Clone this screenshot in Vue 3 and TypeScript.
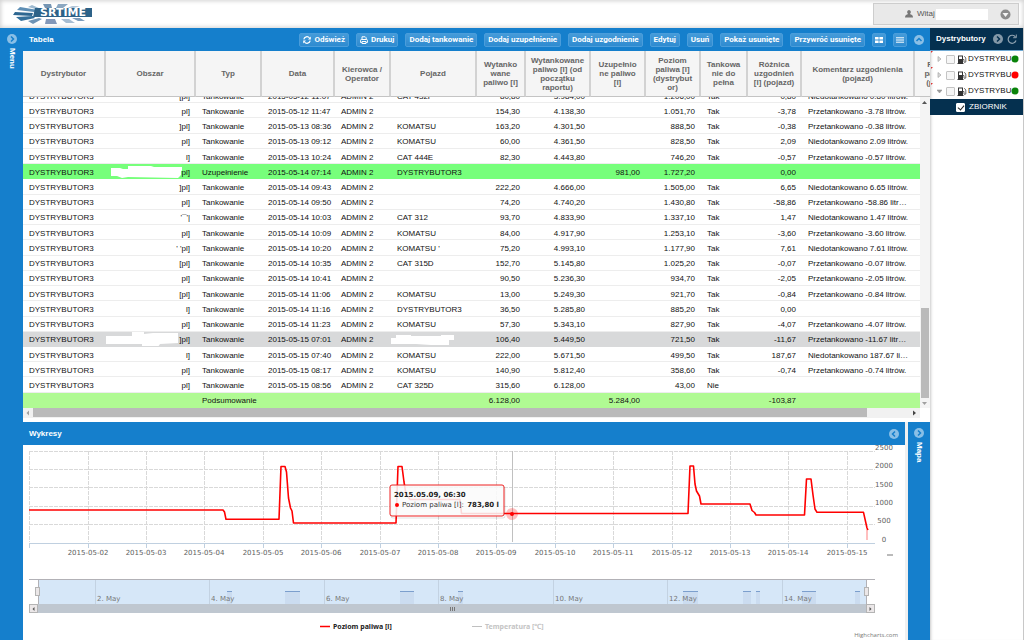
<script setup lang="ts">
import { ref } from 'vue'

interface Column {
  title: string
  width: number
  align: 'left' | 'right'
}

interface Entry {
  cells: string[]
  kind?: 'refill' | 'selected' | 'total'
}

const columns: Column[] = [
  { title: 'Dystrybutor', width: 83, align: 'left' },
  { title: 'Obszar', width: 90, align: 'right' },
  { title: 'Typ', width: 66, align: 'left' },
  { title: 'Data', width: 73, align: 'left' },
  { title: 'Kierowca /\nOperator', width: 56, align: 'left' },
  { title: 'Pojazd', width: 86, align: 'left' },
  { title: 'Wytanko\nwane\npaliwo [l]', width: 49, align: 'right' },
  { title: 'Wytankowane\npaliwo [l] (od\npoczątku\nraportu)', width: 65, align: 'right' },
  { title: 'Uzupełnio\nne paliwo\n[l]', width: 55, align: 'right' },
  { title: 'Poziom\npaliwa [l]\n(dystrybut\nor)', width: 55, align: 'right' },
  { title: 'Tankowa\nnie do\npełna', width: 47, align: 'left' },
  { title: 'Różnica\nuzgodnień\n[l] (pojazd)', width: 54, align: 'right' },
  { title: 'Komentarz uzgodnienia\n(pojazd)', width: 113, align: 'left' },
  { title: 'Poziom\npaliwa [l]\n(pojazd)', width: 55, align: 'right' },
]
const tableWidth = columns.reduce((sum, c) => sum + c.width, 0)

const D = 'DYSTRYBUTOR3'
const T = 'Tankowanie'
const A = 'ADMIN 2'
const tank = (area: string, date: string, vehicle: string, a: string, b: string, level: string, full: string, diff: string, note: string): Entry => ({
  cells: [D, area, T, '2015-05-' + date, A, vehicle, a, b, '', level, full, diff, note, ''],
})

const rows: Entry[] = [
  tank('[pl]', '12 11:07', 'CAT 432F', '80,80', '3.984,00', '1.206,00', 'Tak', '0,80', 'Niedotankowano 0.80 litrów.'),
  tank('pl]', '12 11:47', '', '154,30', '4.138,30', '1.051,70', 'Tak', '-3,78', 'Przetankowano -3.78 litrów.'),
  tank(']pl]', '13 08:36', 'KOMATSU', '163,20', '4.301,50', '888,50', 'Tak', '-0,38', 'Przetankowano -0.38 litrów.'),
  tank('pl]', '13 09:12', 'KOMATSU', '60,00', '4.361,50', '828,50', 'Tak', '2,09', 'Niedotankowano 2.09 litrów.'),
  tank('l]', '13 10:24', 'CAT 444E', '82,30', '4.443,80', '746,20', 'Tak', '-0,57', 'Przetankowano -0.57 litrów.'),
  { kind: 'refill', cells: [D, 'pl]', 'Uzupełnienie', '2015-05-14 07:14', A, D, '', '', '981,00', '1.727,20', '', '0,00', '', ''] },
  tank(']pl]', '14 09:43', '', '222,20', '4.666,00', '1.505,00', 'Tak', '6,65', 'Niedotankowano 6.65 litrów.'),
  tank('pl]', '14 09:50', '', '74,20', '4.740,20', '1.430,80', 'Tak', '-58,86', 'Przetankowano -58.86 litrów.'),
  tank("'¯'|", '14 10:03', 'CAT 312', '93,70', '4.833,90', '1.337,10', 'Tak', '1,47', 'Niedotankowano 1.47 litrów.'),
  tank('pl]', '14 10:09', 'KOMATSU', '84,00', '4.917,90', '1.253,10', 'Tak', '-3,60', 'Przetankowano -3.60 litrów.'),
  tank("' 'pl]", '14 10:20', "KOMATSU '", '75,20', '4.993,10', '1.177,90', 'Tak', '7,61', 'Niedotankowano 7.61 litrów.'),
  tank('[pl]', '14 10:35', 'CAT 315D', '152,70', '5.145,80', '1.025,20', 'Tak', '-0,07', 'Przetankowano -0.07 litrów.'),
  tank('pl]', '14 10:41', '', '90,50', '5.236,30', '934,70', 'Tak', '-2,05', 'Przetankowano -2.05 litrów.'),
  tank('[pl]', '14 11:06', 'KOMATSU', '13,00', '5.249,30', '921,70', 'Tak', '-0,84', 'Przetankowano -0.84 litrów.'),
  tank('l]', '14 11:16', D, '36,50', '5.285,80', '885,20', 'Tak', '0,00', ''),
  tank('pl]', '14 11:23', 'KOMATSU', '57,30', '5.343,10', '827,90', 'Tak', '-4,07', 'Przetankowano -4.07 litrów.'),
  { ...tank(']pl]', '15 07:01', '', '106,40', '5.449,50', '721,50', 'Tak', '-11,67', 'Przetankowano -11.67 litrów.'), kind: 'selected' },
  tank('l]', '15 07:40', 'KOMATSU', '222,00', '5.671,50', '499,50', 'Tak', '187,67', 'Niedotankowano 187.67 litrów.'),
  tank('pl]', '15 08:17', 'KOMATSU', '140,90', '5.812,40', '358,60', 'Tak', '-0,74', 'Przetankowano -0.74 litrów.'),
  tank('pl]', '15 08:56', 'CAT 325D', '315,60', '6.128,00', '43,00', 'Nie', '', ''),
  { kind: 'total', cells: ['', '', 'Podsumowanie', '', '', '', '6.128,00', '', '5.284,00', '', '', '-103,87', '', ''] },
]

const actions = ['Dodaj tankowanie', 'Dodaj uzupełnienie', 'Dodaj uzgodnienie', 'Edytuj', 'Usuń', 'Pokaż usunięte', 'Przywróć usunięte']

const dispensers = ref([
  { id: 1, name: 'DYSTRYBU', open: false, checked: false, color: '#0a830a' },
  { id: 2, name: 'DYSTRYBU', open: false, checked: false, color: '#ff0000' },
  { id: 3, name: 'DYSTRYBU', open: true, checked: false, color: '#0a830a' },
])
const tankChecked = ref(true)

// Chart geometry, in the units of the chart's view box.
const days = ['02', '03', '04', '05', '06', '07', '08', '09', '10', '11', '12', '13', '14', '15'].map((d, i) => ({
  label: '2015-05-' + d,
  x: Math.round(64.5 + i * 58.4),
}))
const levels = [2500, 2000, 1500, 1000, 500, 0].map((v, i) => ({ label: String(v), line: Math.round(5.6 + i * 18.4), text: Math.round(5 + i * 18.3) }))
const navDays = [2, 4, 6, 8, 10, 12, 14].map((d, i) => ({ label: d + '. May', x: Math.round(71.5 + i * 114.5) }))
const navBars = [[204, 5], [262, 15], [377, 14], [435, 5], [660, 15], [720, 8], [733, 4], [779, 14], [832, 5]]
</script>

<template>
  <div class="app">
    <header class="top">
      <svg class="logo" width="82" height="22" viewBox="0 0 82 22" role="img" aria-label="SRTIME">
        <g>
          <path fill="#5f8fb5" d="M8 4l18 3-4 2L5 7z" />
          <path fill="#9db9cf" d="M20 2l9 4-2 1-11-3z" />
          <path fill="#7595b3" d="M31 1h8l1 4h-7z" />
          <path fill="#8ba7c1" d="M46 1h10l-5 4h-7z" />
          <path fill="#b3c6d8" d="M60 3h8l-9 3h-6z" />
          <path fill="#2e6791" d="M3 9l18 1-1 3-19-1z" />
          <path fill="#35709b" d="M4 14l17-1 2 2-14 3z" />
          <path fill="#6d93b5" d="M16 18l11-3 3 1-9 5z" />
          <path fill="#8398b9" d="M34 16h9l2 5H33z" />
          <path fill="#a7bdd2" d="M49 16h8l6 4h-9z" />
          <path fill="#7c9cbb" d="M60 15h8l5 3h-7z" />
        </g>
        <path fill="#2d6288" d="M23 5h57v9H21z" />
        <text x="51" y="13" text-anchor="middle" class="logo-text">SRTIME</text>
      </svg>
      <div class="welcome">
        <svg width="8" height="8" viewBox="0 0 8 8" aria-hidden="true"><path fill="#777" d="M4 0a2 2.200 0 0 1 1 4l2 1q1 .5 1 2.500H0Q0 5.500 1 5l2-1a2 2.200 0 0 1 1-4z" /></svg>
        <span>Witaj</span>
        <i class="blank-name"></i>
        <button class="plain" aria-label="Konto">
          <svg width="11" height="11" viewBox="0 0 11 11"><circle cx="5.500" cy="5.500" r="5" fill="#8b8b8b" /><path fill="#f4f4f4" d="M2.500 4h6l-3 4z" /></svg>
        </button>
      </div>
    </header>

    <div class="body">
      <nav class="strip menu">
        <button class="plain" aria-label="Rozwiń menu">
          <svg width="10" height="10" viewBox="0 0 10 10"><circle cx="5" cy="5" r="5" fill="#8abfe6" /><path d="M4 2.500L6.500 5 4 7.500" fill="none" stroke="#157fcc" stroke-width="1.500" /></svg>
        </button>
        <span>Menu</span>
      </nav>

      <main class="center">
        <section class="table-panel">
          <div class="bar">
            <h2>Tabela</h2>
            <div class="tools">
              <button class="btn">
                <svg width="8" height="8" viewBox="0 0 8 8" aria-hidden="true"><path d="M.8 3.300A3.200 3.200 0 0 1 6.500 2M7.200 4.700A3.200 3.200 0 0 1 1.500 6" fill="none" stroke="#fff" stroke-width="1.200" /><path fill="#fff" d="M7.800.5v3H5zM.2 7.500v-3H3z" /></svg>
                Odśwież
              </button>
              <button class="btn">
                <svg width="8" height="8" viewBox="0 0 8 8" aria-hidden="true"><path d="M2 3.500V.8h3.200l1 1v1.700M2 5.500h4v2H2zM1.800 6.500H.6V4.300q0-.8.8-.8h5.200q.8 0 .8.800v2.200H6.200" fill="none" stroke="#fff" /></svg>
                Drukuj
              </button>
              <button v-for="a in actions" :key="a" class="btn">{{ a }}</button>
              <button class="btn icon" aria-label="Kafelki">
                <svg width="8" height="6" viewBox="0 0 8 6"><path fill="#fff" d="M0 0h3.600v2.600H0zM4.400 0H8v2.600H4.400zM0 3.400h3.600V6H0zM4.400 3.400H8V6H4.400z" /></svg>
              </button>
              <button class="btn icon" aria-label="Lista">
                <svg width="8" height="6" viewBox="0 0 8 6"><path stroke="#fff" d="M0 .8h8M0 3h8M0 5.200h8" /></svg>
              </button>
              <button class="plain" aria-label="Zwiń tabelę">
                <svg width="10" height="10" viewBox="0 0 10 10"><circle cx="5" cy="5" r="5" fill="#8abfe6" /><path d="M2.500 6L5 3.500 7.500 6" fill="none" stroke="#157fcc" stroke-width="1.500" /></svg>
              </button>
            </div>
          </div>

          <div class="head-wrap">
            <table class="grid head" :style="{ width: tableWidth + 'px' }">
              <colgroup><col v-for="c in columns" :key="c.title" :style="{ width: c.width + 'px' }" /></colgroup>
              <thead>
                <tr><th v-for="c in columns" :key="c.title" scope="col">{{ c.title }}</th></tr>
              </thead>
            </table>
          </div>

          <div class="rows-area">
            <div class="rows-wrap">
              <table class="grid rows" :style="{ width: tableWidth + 'px' }">
                <colgroup><col v-for="c in columns" :key="c.title" :style="{ width: c.width + 'px' }" /></colgroup>
                <tbody>
                  <tr v-for="(r, i) in rows" :key="i" :class="r.kind">
                    <td v-for="(cell, j) in r.cells" :key="j" :class="[columns[j].align, { note: j === 12, tight: j === 2 || j === 3 }]">
                      {{ cell }}
                      <svg v-if="r.kind === 'refill' && j === 1" class="mask" width="76" height="15" viewBox="0 0 76 15"><path fill="#fff" d="M5 4h9l3 1h5V2h23l3 1h29v3l-2 1v4l-3 3-50-1-6 1-5-2H5z" /></svg>
                      <svg v-if="r.kind === 'selected' && j === 1" class="mask" width="76" height="15" viewBox="0 0 76 15"><path fill="#fff" d="M0 4h26V0h12v2l9-1h25v10l-18 1-2 3H36v-3H0z" /></svg>
                      <svg v-if="r.kind === 'selected' && j === 5" class="mask left-mask" width="76" height="15" viewBox="0 0 76 15"><path fill="#fff" d="M0 6h5V3h15v1h30V3h13v5h-5v5H40l-15-1H0z" /></svg>
                    </td>
                  </tr>
                </tbody>
              </table>
            </div>
            <div class="vscroll" aria-hidden="true">
              <svg width="9" height="10" viewBox="0 0 9 10"><path fill="#555" d="M2 7l2.500-3L7 7z" /></svg>
              <i></i>
              <svg width="9" height="10" viewBox="0 0 9 10"><path fill="#a0a0a0" d="M2 4l2.500 3L7 4z" /></svg>
            </div>
          </div>
          <div class="hscroll" aria-hidden="true">
            <svg width="10" height="10" viewBox="0 0 10 10"><path fill="#a0a0a0" d="M6 2.500v5L3.500 5z" /></svg>
            <i></i>
            <svg width="12" height="10" viewBox="0 0 12 10"><path fill="#444" d="M5 2.500v5L8 5z" /></svg>
          </div>
        </section>

        <div class="lower">
          <section class="chart-panel">
            <div class="bar">
              <h2>Wykresy</h2>
              <button class="plain" aria-label="Zwiń wykresy">
                <svg width="10" height="10" viewBox="0 0 10 10"><circle cx="5" cy="5" r="5" fill="#8abfe6" /><path d="M6 2.500L3.500 5 6 7.500" fill="none" stroke="#157fcc" stroke-width="1.500" /></svg>
              </button>
            </div>
            <svg class="chart" viewBox="0 0 882 195" role="img" aria-label="Poziom paliwa">
              <g stroke="#d9d9d9" stroke-dasharray="4 1" shape-rendering="crispEdges">
                <path v-for="l in levels.slice(0, 5)" :key="l.label" :d="`M6 ${l.line}H852`" />
                <path d="M6 6V97" />
                <path v-for="d in days" :key="d.label" :d="`M${d.x} 6V97`" />
              </g>
              <g stroke="#c0d0e0" shape-rendering="crispEdges">
                <path d="M6 98H852M6 98v5" />
                <path v-for="d in days" :key="d.label" :d="`M${d.x} 98v5`" />
              </g>
              <g class="axis">
                <text v-for="d in days" :key="d.label" :x="d.x" y="110" text-anchor="middle">{{ d.label }}</text>
                <text v-for="l in levels" :key="l.label" x="861" :y="l.text" text-anchor="middle">{{ l.label }}</text>
              </g>
              <path d="M864 110h6" stroke="#777" />
              <path d="M489.500 6V97" stroke="#c0c0c0" />
              <path
                fill="none" stroke="#f00" stroke-width="1.600" stroke-linejoin="round"
                d="M6 65H200L201.500 67 203 74.300H256L258 21.500H262L263.500 27 265.500 53 267.500 63 269 66 270.500 78H373L375 21.500H379L381 37 383 49 387 54.500H437L438.500 68.500H665L667 21H670.500L672 39 673.500 46 676.500 51 678 59H727L729 65.500 731.500 67.500 733 70H781.500L783.500 34H788L790 50 792 64 794 67.300H840.500L844 83 845 85"
              />
              <path d="M844 84v11" stroke="#f00" stroke-opacity=".5" />
              <circle cx="489" cy="69" r="6" fill="#f00" fill-opacity=".25" />
              <circle cx="489" cy="69" r="2" fill="#f00" />
              <g>
                <rect x="368" y="42" width="114" height="31" rx="2" fill="none" stroke="#000" stroke-opacity=".12" />
                <rect x="367" y="40" width="114" height="31" rx="2" fill="#fafafa" fill-opacity=".86" stroke="#ee2020" />
                <text x="371" y="52" class="tip-bold">2015.05.09, 06:30</text>
                <circle cx="374" cy="60" r="2" fill="#f00" />
                <text x="379" y="62" class="tip">Poziom paliwa [l]:</text>
                <text x="476" y="62" text-anchor="end" class="tip-bold">783,80 l</text>
              </g>

              <rect x="15" y="134" width="829" height="25" fill="#d6e7f8" />
              <path d="M6 134.500H852" stroke="#b2b1b6" />
              <g shape-rendering="crispEdges">
                <path v-for="n in navDays" :key="n.label" :d="`M${n.x} 135v24`" stroke="#c3d2e2" />
                <rect v-for="b in navBars" :key="b[0]" :x="b[0]" y="146" :width="b[1]" height="13" fill="#cbdcf0" />
                <rect v-for="b in navBars" :key="b[0]" :x="b[0]" y="146" :width="b[1]" height="1" fill="#7c9fcd" />
              </g>
              <g class="nav">
                <text v-for="n in navDays" :key="n.label" :x="n.x + 2" y="156">{{ n.label }}</text>
              </g>
              <rect x="6" y="159" width="846" height="9" fill="#bfc7d0" />
              <path d="M15.500 134v25M843.500 134v25" stroke="#b2b1b6" />
              <g fill="#ebe7e8" stroke="#b4b4b4">
                <rect x="6.500" y="159.500" width="8" height="8" /><rect x="843.500" y="159.500" width="8" height="8" />
                <rect x="12.500" y="142.500" width="4" height="8" /><rect x="841.500" y="142.500" width="4" height="8" />
              </g>
              <path fill="#555" d="M11.500 162v4l-2-2zM846.500 162v4l2-2z" />
              <path d="M427.500 162v4M429.500 162v4M431.500 162v4" stroke="#777" />

              <path d="M297 181.500h10" stroke="#f00" stroke-width="1.500" />
              <text x="310" y="184" class="legend">Poziom paliwa [l]</text>
              <path d="M449 181.500h10" stroke="#c0c0c0" />
              <text x="462" y="184" class="legend off">Temperatura [℃]</text>
              <text x="875" y="192" text-anchor="end" class="credit">Highcharts.com</text>
            </svg>
          </section>
          <div class="strip map">
            <button class="plain" aria-label="Rozwiń mapę">
              <svg width="10" height="10" viewBox="0 0 10 10"><circle cx="5" cy="5" r="5" fill="#8abfe6" /><path d="M4 2.500L6.500 5 4 7.500" fill="none" stroke="#157fcc" stroke-width="1.500" /></svg>
            </button>
            <span>Mapa</span>
          </div>
        </div>
      </main>

      <aside class="side">
        <div class="side-head">
          <h2>Dystrybutory</h2>
          <button class="plain" aria-label="Zwiń panel">
            <svg width="10" height="10" viewBox="0 0 10 10"><circle cx="5" cy="5" r="5" fill="#8398a8" /><path d="M4 2.500L6.500 5 4 7.500" fill="none" stroke="#05304f" stroke-width="1.500" /></svg>
          </button>
          <button class="plain" aria-label="Odśwież listę">
            <svg width="10" height="10" viewBox="0 0 10 10"><path d="M8.500 3A4 4 0 1 0 9 6.500" fill="none" stroke="#8fa2b0" stroke-width="1.200" /><path d="M9.300.5v3.200H6.200" fill="none" stroke="#8fa2b0" /></svg>
          </button>
        </div>
        <ul class="tree">
          <li v-for="d in dispensers" :key="d.id">
            <i class="dirty"></i>
            <svg width="5" height="6" viewBox="0 0 5 6" aria-hidden="true"><path :d="d.open ? 'M0 2h5L2.500 5z' : 'M1 .5L4 3 1 5.500z'" :fill="d.open ? '#999' : '#ddd'" stroke="#999" stroke-width=".6" /></svg>
            <label>
              <input v-model="d.checked" type="checkbox" />
              <svg width="10" height="9" viewBox="0 0 10 9" aria-hidden="true"><path fill="#333" fill-rule="evenodd" d="M1 .5h5V8h.5v1H.5V8H1zM2 1.500V4h3V1.500z" /><path d="M6 4.500h1v2.500q.8 1 1.800 0V3L7.300 1.200" fill="none" stroke="#444" stroke-width=".8" /></svg>
              <span>{{ d.name }}</span>
            </label>
            <svg class="dot" width="8" height="8" viewBox="0 0 8 8" aria-hidden="true"><circle cx="4" cy="4" r="3.500" :fill="d.color" /></svg>
          </li>
          <li class="leaf">
            <label><input v-model="tankChecked" type="checkbox" /><span>ZBIORNIK</span></label>
          </li>
        </ul>
      </aside>
    </div>
  </div>
</template>

<style>
body {
  margin: 0;
  overflow: hidden;
}
</style>

<style scoped>
.app {
  height: 100vh;
  display: flex;
  flex-direction: column;
  background: #fff;
  color: #111;
  font: 8px/10px "Liberation Sans", Arial, sans-serif;
}
* {
  box-sizing: border-box;
}
svg {
  display: block;
  flex: none;
}
h2 {
  margin: 0;
  font-size: 8px;
  font-weight: bold;
  color: #fff;
}
button {
  font: inherit;
  cursor: pointer;
}
.plain {
  display: block;
  border: 0;
  padding: 0;
  background: none;
}
.top {
  flex: none;
  height: 28px;
  display: flex;
  justify-content: space-between;
  align-items: center;
  padding: 0 5px 0 12px;
  background: #fff;
  box-shadow: inset 0 0 4px 1px #d2d2d2;
}
.logo-text {
  font: bold 11px "DejaVu Sans", sans-serif;
  fill: #fff;
}
.welcome {
  width: 146px;
  height: 22px;
  display: flex;
  align-items: center;
  gap: 4px;
  padding: 0 7px 0 31px;
  background: #e9e9e9;
  border: 1px solid #cdcdcd;
  color: #555;
}
.blank-name {
  width: 52px;
  height: 11px;
  margin-left: -3px;
  background: #fff;
}
.welcome button {
  margin-left: auto;
}
.body {
  flex: 1;
  min-height: 0;
  display: flex;
}
.strip {
  flex: none;
  display: flex;
  flex-direction: column;
  align-items: center;
  gap: 4px;
  padding-top: 6px;
  background: #157fcc;
  color: #fff;
  font-weight: bold;
}
.strip span {
  writing-mode: vertical-rl;
}
.menu {
  width: 23px;
}
.map {
  width: 22px;
}
.center {
  flex: 1;
  min-width: 0;
  display: flex;
  flex-direction: column;
}
.table-panel {
  flex: 1;
  min-height: 0;
  display: flex;
  flex-direction: column;
  padding-bottom: 4px;
}
.bar {
  flex: none;
  height: 23px;
  display: flex;
  align-items: center;
  justify-content: space-between;
  padding: 0 6px;
  background: #157fcc;
}
.tools {
  display: flex;
  align-items: center;
  gap: 7px;
}
.btn {
  height: 14px;
  display: flex;
  align-items: center;
  gap: 3px;
  padding: 0 3px;
  border: 1px solid #4a9ddb;
  border-radius: 2px;
  background: linear-gradient(#459bd9, #2f8bd0);
  color: #fff;
  font: bold 8px/10px Roboto, "Liberation Sans", sans-serif;
  white-space: nowrap;
}
.btn.icon {
  width: 14px;
  padding: 0;
  justify-content: center;
}
.grid {
  table-layout: fixed;
  border-collapse: separate;
  border-spacing: 0;
}
.head-wrap {
  flex: none;
  overflow: hidden;
  background: #f5f5f5;
}
.head th {
  height: 46px;
  padding: 0;
  border-right: 2px solid #d2d2d2;
  border-bottom: 1px solid #c4c4c4;
  color: #666;
  font: bold 8px/9px "Liberation Sans", Arial, sans-serif;
  text-align: center;
  white-space: pre;
}
.rows-area {
  flex: 1;
  min-height: 0;
  display: flex;
}
.rows-wrap {
  flex: 1;
  min-width: 0;
  overflow: hidden;
}
.rows {
  height: calc(100% + 9px);
  margin-top: -9px;
}
.rows td {
  position: relative;
  padding: 3px 6px 0;
  border-bottom: 1px solid #ededed;
  overflow: hidden;
  white-space: nowrap;
  text-overflow: ellipsis;
  text-align: left;
}
.rows td.right {
  text-align: right;
}
.rows td.note {
  padding-right: 5px;
}
.rows td.tight {
  padding-right: 0;
}
.refill td {
  background: #77ff7b;
  border-color: #77ff7b;
}
.selected td {
  background: #d8d9da;
  border-color: #d8d9da;
}
.total td {
  background: #b0fa93;
  border-color: #b0fa93;
}
.mask {
  position: absolute;
  left: 0;
  top: 0;
}
.vscroll {
  flex: none;
  width: 10px;
  display: flex;
  flex-direction: column;
  justify-content: space-between;
  background: #f4f4f4;
}
.vscroll i {
  width: 8px;
  height: 29%;
  margin: auto 0 0 1px;
  background: #bababa;
}
.hscroll {
  flex: none;
  height: 10px;
  display: flex;
  justify-content: space-between;
  margin-right: 10px;
  background: #f1f1f1;
}
.hscroll i {
  width: 93%;
  height: 9px;
  margin-right: auto;
  background: #bababa;
}
.lower {
  flex: none;
  display: flex;
  gap: 3px;
  background: #f0f0f0;
}
.chart-panel {
  flex: 1;
  min-width: 0;
  background: #fff;
}
.chart {
  width: 100%;
  height: auto;
}
.axis text,
.nav text {
  font: 7px "DejaVu Sans", sans-serif;
  fill: #606060;
}
.nav text {
  fill: #777;
}
.tip {
  font: 7px "DejaVu Sans", sans-serif;
  fill: #333;
}
.tip-bold {
  font: bold 7px "DejaVu Sans", sans-serif;
  fill: #222;
}
.legend {
  font: bold 7px "Noto Sans", "Noto Sans CJK SC", sans-serif;
  fill: #222;
}
.legend.off {
  fill: #c4c4c4;
}
.credit {
  font: 6px "Open Sans", sans-serif;
  fill: #777;
}
.side {
  flex: none;
  width: 94px;
  background: #fff;
  border-right: 1px solid #c8c8c8;
  box-shadow: inset 3px 0 3px -2px #c8c8c8;
}
.side-head {
  height: 23px;
  display: flex;
  align-items: center;
  gap: 4px;
  padding: 0 6px;
  background: #05304f;
  border-bottom: 1px solid #6fa9d3;
}
.side-head h2 {
  margin-right: auto;
}
.tree {
  margin: 0;
  padding: 0;
  list-style: none;
}
.tree li {
  position: relative;
  height: 16px;
  display: flex;
  align-items: center;
  gap: 4px;
  padding: 0 4px 0 7px;
}
.tree label {
  flex: 1;
  min-width: 0;
  display: flex;
  align-items: center;
}
.tree input {
  position: relative;
  flex: none;
  appearance: none;
  width: 9px;
  height: 9px;
  margin: 0 2px 0 0;
  border: 1px solid #c4c4c4;
  border-radius: 1px;
  background: #f6f6f6;
}
.tree label svg {
  margin-right: 1px;
}
.dot {
  position: absolute;
  right: 4px;
  top: 4px;
}
.dirty {
  position: absolute;
  left: 1px;
  top: 0;
  border: 1px solid #d33;
  border-right-color: transparent;
  border-bottom-color: transparent;
}
.tree .leaf {
  padding-left: 26px;
  background: #05304f;
  color: #fff;
}
.tree .leaf input {
  margin-right: 4px;
  border-color: #fff;
  background: #fff;
}
.leaf input:checked::after {
  content: "";
  position: absolute;
  left: 2px;
  top: 0;
  width: 3px;
  height: 5px;
  border: solid #222;
  border-width: 0 1px 1px 0;
  transform: rotate(40deg);
}
</style>
